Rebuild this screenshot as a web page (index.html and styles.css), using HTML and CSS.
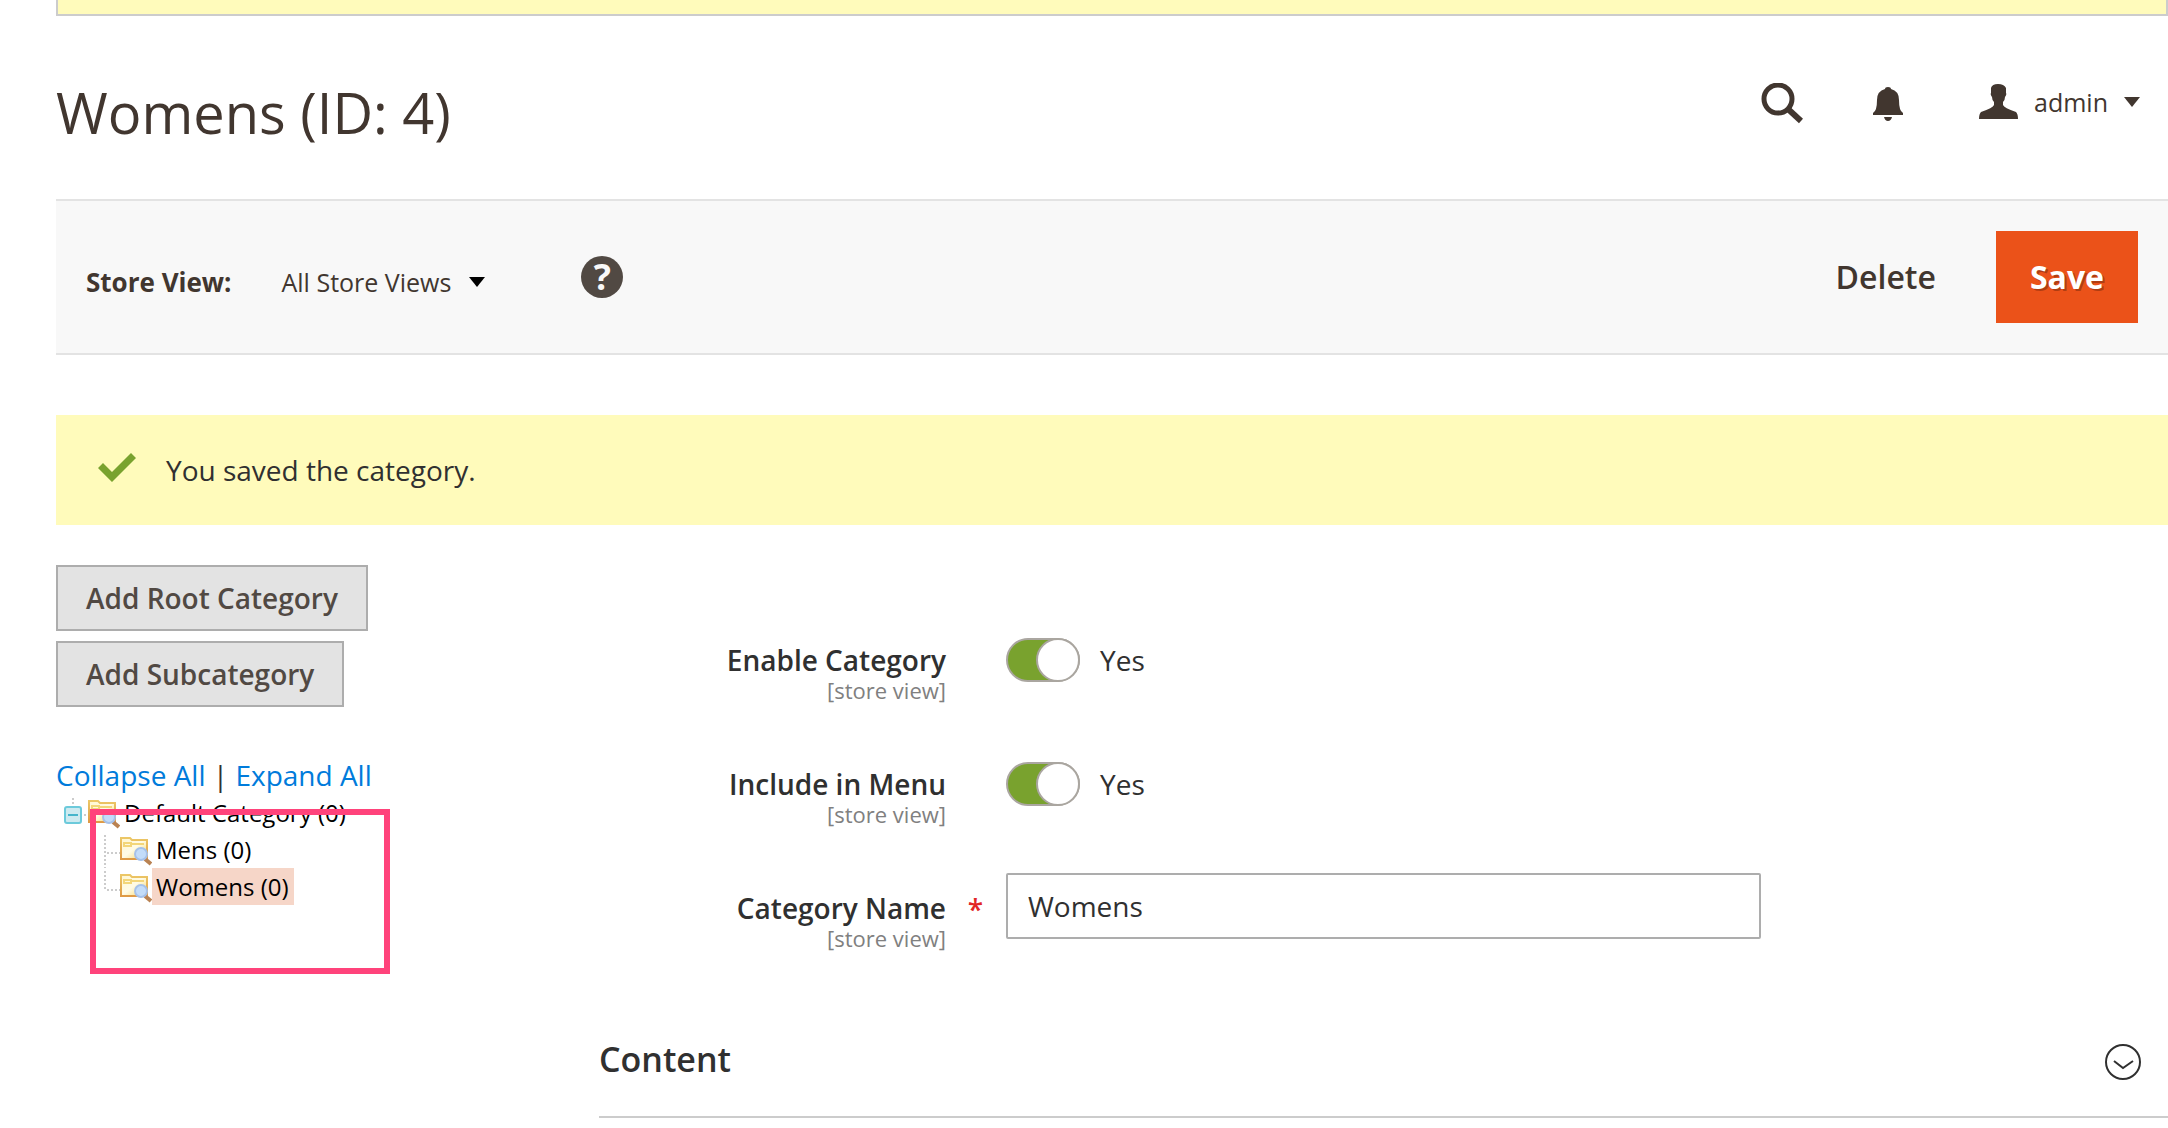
FILE: index.html
```html
<!DOCTYPE html>
<html lang="en">
<head>
    <meta charset="UTF-8">
    <meta name="viewport" content="width=device-width, initial-scale=1.0">
    <title>Womens (ID: 4)</title>
    <link rel="stylesheet" href="styles.css">
</head>
<body>
    <!-- folder icon used by every node of the category tree -->
    <svg class="sprite" aria-hidden="true">
        <defs>
            <linearGradient id="folderFill" x1="0" y1="0" x2="1" y2="1">
                <stop offset="0" stop-color="#fff6cf"/>
                <stop offset="0.5" stop-color="#fffbe6"/>
                <stop offset="1" stop-color="#f9d45a"/>
            </linearGradient>
            <linearGradient id="folderEdge" x1="0" y1="0" x2="0" y2="1">
                <stop offset="0" stop-color="#ecc766"/>
                <stop offset="1" stop-color="#df9a45"/>
            </linearGradient>
        </defs>
        <symbol id="folder" viewBox="0 0 32 32">
            <path d="M1 2H10L12 4H27V23H1Z" fill="url(#folderFill)" stroke="url(#folderEdge)" stroke-width="2"/>
            <path d="M4 7H11V10H4ZM12 8H24" stroke="#f3d679" stroke-width="2" fill="none"/>
            <path d="M25 23L31 28" stroke="#b98252" stroke-width="4"/>
            <circle cx="21" cy="18" r="6" fill="#c3dcf9" stroke="#a5c1ea" stroke-width="2"/>
        </symbol>
    </svg>

    <div class="page">
        <div class="notice"></div>

        <header class="header">
            <h1 class="title">Womens (ID: 4)</h1>
            <button class="icon-btn search-btn" type="button" aria-label="Search">
                <svg width="42" height="42" viewBox="0 0 42 42">
                    <circle cx="17" cy="16" r="14" fill="none" stroke="#41362f" stroke-width="5"/>
                    <path d="M27 26L40 38" stroke="#41362f" stroke-width="6"/>
                </svg>
            </button>
            <button class="icon-btn bell-btn" type="button" aria-label="Notifications">
                <svg width="30" height="34" viewBox="0 0 30 34">
                    <path d="M12 2Q12 0 15 0T18 2Q26 4 26 13Q26 24 30 26V28H0V26Q4 24 4 13Q4 4 12 2ZM11 30H19Q18 34 15 34T11 30Z" fill="#41362f"/>
                </svg>
            </button>
            <button class="icon-btn user-btn" type="button">
                <svg width="39" height="36" viewBox="0 0 39 36">
                    <path d="M12 4Q13 0 19 0T27 4V9Q28 10 26 13Q26 16 24 18V21Q25 24 37 28Q39 30 39 35H0Q0 30 2 28Q14 24 15 21V18Q13 16 13 13Q11 10 12 9Z" fill="#41362f"/>
                </svg>
                <span>admin</span>
                <svg width="16" height="10" viewBox="0 0 16 10"><path d="M0 0H16L8 10Z" fill="#41362f"/></svg>
            </button>
        </header>

        <div class="toolbar">
            <span class="store-label" id="storeLabel">Store View:</span>
            <button class="store-btn" type="button" aria-describedby="storeLabel">
                All Store Views
                <svg width="16" height="10" viewBox="0 0 16 10"><path d="M0 0H16L8 10Z" fill="#000"/></svg>
            </button>
            <a class="help" href="#" aria-label="Help">?</a>
            <button class="delete-btn" type="button">Delete</button>
            <button class="save-btn" type="submit" form="categoryForm">Save</button>
        </div>

        <div class="message">
            <svg width="38" height="30" viewBox="0 0 38 30"><path d="M0 15L5 10L14 19L33 0L38 5L14 29Z" fill="#79a22e"/></svg>
            <span>You saved the category.</span>
        </div>

        <div class="columns">
            <aside class="sidebar">
                <button class="add-btn" type="button">Add Root Category</button>
                <button class="add-btn" type="button">Add Subcategory</button>
                <div class="tree-actions">
                    <a href="#">Collapse All</a> | <a href="#">Expand All</a>
                </div>
                <div class="tree">
                    <div class="node">
                        <svg class="branch" width="24" height="37" viewBox="0 0 24 37">
                            <path d="M9 4V12M20 21H24" stroke="#ccc" stroke-width="2" stroke-dasharray="2 2"/>
                            <rect x="1" y="13" width="16" height="16" rx="2" fill="#cdeaf0" stroke="#6ccadb" stroke-width="2"/>
                            <path d="M4 21H14" stroke="#45b5cb" stroke-width="2"/>
                        </svg>
                        <svg class="folder"><use href="#folder"/></svg>
                        <a href="#">Default Category (0)</a>
                    </div>
                    <div class="node child">
                        <svg class="branch" width="16" height="37" viewBox="0 0 16 37">
                            <path d="M1 4V37M3 22H16" stroke="#ccc" stroke-width="2" stroke-dasharray="2 2"/>
                        </svg>
                        <svg class="folder"><use href="#folder"/></svg>
                        <a href="#">Mens (0)</a>
                    </div>
                    <div class="node child">
                        <svg class="branch" width="16" height="37" viewBox="0 0 16 37">
                            <path d="M1 3V22M3 22H16" stroke="#ccc" stroke-width="2" stroke-dasharray="2 2"/>
                        </svg>
                        <svg class="folder"><use href="#folder"/></svg>
                        <a class="selected" href="#">Womens (0)</a>
                    </div>
                    <div class="highlight"></div>
                </div>
            </aside>

            <main class="main">
                <form class="form" id="categoryForm" action="#">
                    <div class="field">
                        <label class="label" for="enable">Enable Category <small>[store view]</small></label>
                        <div class="control">
                            <input class="switch" id="enable" type="checkbox" checked>
                            <span>Yes</span>
                        </div>
                    </div>
                    <div class="field">
                        <label class="label" for="menu">Include in Menu <small>[store view]</small></label>
                        <div class="control">
                            <input class="switch" id="menu" type="checkbox" checked>
                            <span>Yes</span>
                        </div>
                    </div>
                    <div class="field required">
                        <label class="label" for="name">Category Name <small>[store view]</small></label>
                        <div class="control">
                            <input class="text" id="name" type="text" value="Womens">
                        </div>
                    </div>
                </form>

                <section class="section">
                    <h2>Content</h2>
                    <button class="icon-btn" type="button" aria-label="Expand Content">
                        <svg width="37" height="37" viewBox="0 0 37 37">
                            <circle cx="18" cy="18" r="17" fill="none" stroke="#303030" stroke-width="2"/>
                            <path d="M9 17L18 24L28 17" fill="none" stroke="#303030" stroke-width="2"/>
                        </svg>
                    </button>
                </section>
            </main>
        </div>
    </div>
</body>
</html>
```

FILE: styles.css
```css
* {
    box-sizing: border-box;
}

body {
    margin: 0;
    background-color: #fff;
    color: #303030;
    font-family: "Open Sans", "Noto Sans", sans-serif;
    font-size: 28px;
    line-height: 38px;
}

button {
    border: none;
    background: none;
    padding: 0;
    color: #41362f;
    font: inherit;
    cursor: pointer;
}

a {
    color: #007bdb;
    text-decoration: none;
}

svg {
    display: block;
    flex: none;
}

.sprite {
    position: absolute;
    width: 0;
    height: 0;
}

.page {
    padding-left: 56px;
}

.notice {
    height: 16px;
    border: 2px solid #ccc;
    border-top: none;
    background-color: #fffbbb;
}

/* header */
.header {
    display: flex;
    align-items: flex-start;
    height: 183px;
    padding: 58px 28px 0 0;
}

.title {
    flex: 1;
    margin: 0;
    color: #41362f;
    font-size: 56px;
    font-weight: 400;
    line-height: 76px;
}

.icon-btn {
    display: flex;
    align-items: center;
}

.search-btn,
.bell-btn {
    height: 60px;
}

.search-btn {
    margin-right: 70px;
}

.bell-btn {
    margin-right: 76px;
}

.user-btn {
    gap: 16px;
    height: 56px;
    font-size: 25px;
}

/* toolbar */
.toolbar {
    display: flex;
    align-items: center;
    height: 156px;
    padding: 0 30px;
    border-top: 2px solid #e3e3e3;
    border-bottom: 2px solid #e3e3e3;
    background-color: #f8f8f8;
    color: #41362f;
}

.store-label,
.store-btn {
    padding-top: 10px;
}

.store-label {
    margin-right: 50px;
    font-size: 26px;
    font-weight: 700;
}

.store-btn {
    display: flex;
    align-items: center;
    gap: 18px;
    font-size: 25px;
}

.help {
    width: 42px;
    height: 42px;
    margin: 0 auto 0 96px;
    border-radius: 50%;
    background-color: #514943;
    color: #f8f8f8;
    font-size: 36px;
    font-weight: 700;
    line-height: 42px;
    text-align: center;
}

.delete-btn,
.save-btn {
    font-size: 32px;
    font-weight: 600;
}

.save-btn {
    height: 92px;
    margin-left: 60px;
    padding: 0 34px;
    background-color: #eb5219;
    color: #fff;
    font-weight: 700;
    text-shadow: 2px 2px 0 rgba(0, 0, 0, 0.25);
}

/* message */
.message {
    display: flex;
    align-items: center;
    gap: 30px;
    height: 110px;
    margin-top: 60px;
    padding-left: 42px;
    background-color: #fffbbb;
}

.message svg {
    margin-bottom: 4px;
}

.columns {
    display: grid;
    grid-template-columns: 543px 1fr;
}

/* category tree */
.sidebar {
    padding-top: 40px;
}

.add-btn {
    display: block;
    height: 66px;
    margin-bottom: 10px;
    padding: 0 28px;
    border: 2px solid #adadad;
    background-color: #e3e3e3;
    color: #514943;
    font-weight: 600;
}

.tree-actions {
    margin-top: 50px;
    line-height: 37px;
}

.tree {
    position: relative;
    padding-left: 8px;
    font-size: 24px;
    line-height: 37px;
}

.node {
    display: flex;
    height: 37px;
}

.child {
    padding-left: 40px;
}

.folder {
    width: 32px;
    height: 32px;
    margin-top: 5px;
}

.node a {
    padding: 0 5px 0 4px;
    color: #000;
}

.node .selected {
    background-color: #f6d6c8;
}

.highlight {
    position: absolute;
    top: 15px;
    left: 34px;
    width: 300px;
    height: 165px;
    border: 6px solid #ff437b;
}

/* form */
.form {
    padding-top: 108px;
}

.field {
    display: grid;
    grid-template-columns: 347px 1fr;
    gap: 60px;
    height: 124px;
}

.label {
    position: relative;
    padding-top: 10px;
    font-weight: 600;
    line-height: 34px;
    text-align: right;
}

.label small {
    display: block;
    color: #808080;
    font-size: 22px;
    font-weight: 400;
    line-height: 26px;
}

.required .label::after {
    content: "*";
    position: absolute;
    top: 11px;
    right: -37px;
    color: #e22626;
}

.control {
    display: flex;
    align-items: center;
    gap: 20px;
    height: 54px;
}

.required .control {
    height: 50px;
}

.switch {
    appearance: none;
    width: 74px;
    height: 44px;
    margin: 0;
    border: 2px solid #aaa6a0;
    border-radius: 22px;
    background-color: #79a22e;
}

.switch::before {
    content: "";
    display: block;
    box-sizing: border-box;
    width: 44px;
    height: 44px;
    margin: -2px -2px 0 auto;
    border: 2px solid #aaa6a0;
    border-radius: 50%;
    background-color: #fff;
}

.text {
    width: 65%;
    height: 66px;
    padding: 0 20px;
    border: 2px solid #adadad;
    border-radius: 2px;
    color: #303030;
    font: inherit;
}

.section {
    display: flex;
    align-items: center;
    justify-content: space-between;
    height: 113px;
    padding-right: 26px;
    border-bottom: 2px solid #ccc;
}

.section h2 {
    margin: 0;
    padding-bottom: 4px;
    font-size: 34px;
    font-weight: 600;
}

.section .icon-btn {
    padding-top: 4px;
}
```
